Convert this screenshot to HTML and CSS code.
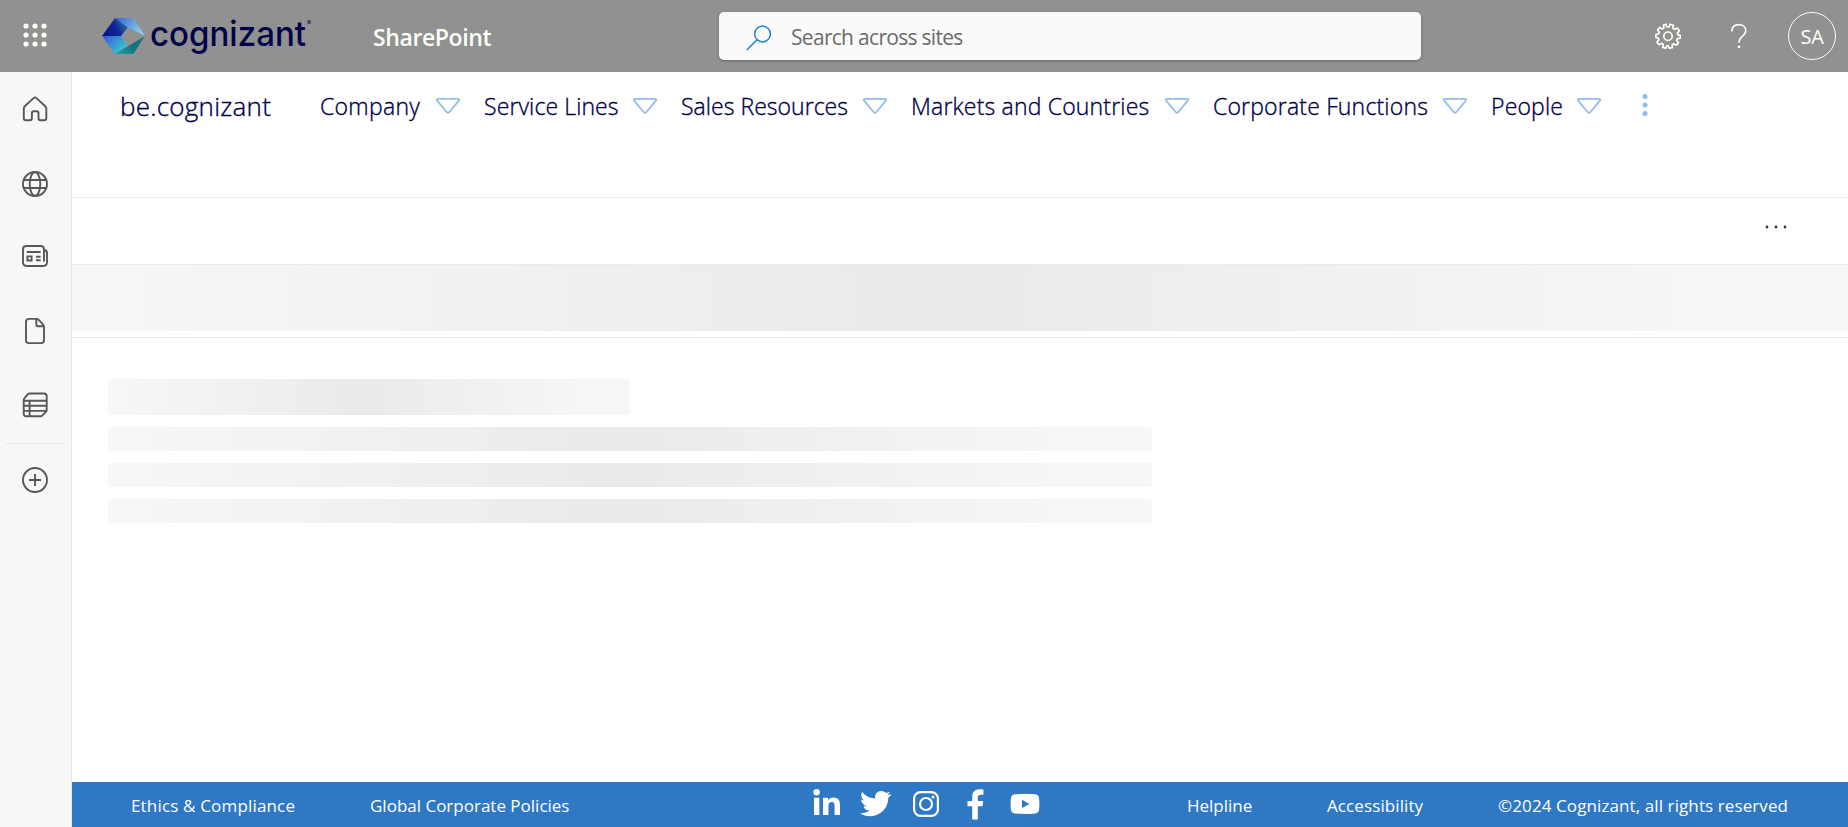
FILE: index.html
```html
<!DOCTYPE html>
<html lang="en">
<head>
<meta charset="utf-8">
<title>be.cognizant</title>
<link rel="stylesheet" href="styles.css">
</head>
<body>
<svg width="0" height="0" class="defs">
  <symbol id="tri" viewBox="0 0 26 18"><path d="M2.7 1.8H23.3Q24.8 2.1 24 3.4L14.2 15.2Q13 16.4 11.8 15.2L2 3.4Q1.2 2.1 2.7 1.8Z" fill="none" stroke="#91bcec" stroke-width="1.7"/></symbol>
</svg>
<header class="top">
  <svg class="waffle" width="24" height="24" viewBox="0 0 24 24" fill="#fbfff5"><circle cx="3" cy="3" r="2.6"/><circle cx="12" cy="3" r="2.6"/><circle cx="21" cy="3" r="2.6"/><circle cx="3" cy="12" r="2.6"/><circle cx="12" cy="12" r="2.6"/><circle cx="21" cy="12" r="2.6"/><circle cx="3" cy="21" r="2.6"/><circle cx="12" cy="21" r="2.6"/><circle cx="21" cy="21" r="2.6"/></svg>
  <svg class="logo" width="212" height="44" viewBox="0 0 212 44">
    <defs>
      <linearGradient id="g1" x1="0" y1=".6" x2="1" y2=".2"><stop offset="0" stop-color="#0a1385"/><stop offset=".5" stop-color="#10289a"/><stop offset="1" stop-color="#2b8ba4"/></linearGradient>
      <linearGradient id="g2" x1="0" y1="0" x2="1" y2=".5"><stop offset="0" stop-color="#3560cf"/><stop offset="1" stop-color="#8ccdeb"/></linearGradient>
      <linearGradient id="g3" x1="0" y1="0" x2="1" y2=".7"><stop offset="0" stop-color="#3b56d2"/><stop offset=".45" stop-color="#3a8ad6"/><stop offset="1" stop-color="#2fd0cc"/></linearGradient>
      <linearGradient id="g4" x1="0" y1="1" x2="1" y2="0"><stop offset="0" stop-color="#2aa3b0"/><stop offset=".5" stop-color="#147080"/><stop offset="1" stop-color="#257a85"/></linearGradient>
    </defs>
    <path d="M0 22L13 4L26 13.200L19 22Z" fill="url(#g1)"/>
    <path d="M13 4H31.500L43 22L26 13.200Z" fill="url(#g2)"/>
    <path d="M0 22H19L25.500 31.500L13 40Z" fill="url(#g3)"/>
    <path d="M13 40L43 22L31.500 40Z" fill="url(#g4)"/>
    <text class="wordmark" x="48" y="31.500" textLength="156" lengthAdjust="spacingAndGlyphs">cognizant</text>
    <text class="reg" x="205" y="10.500">®</text>
  </svg>
  <span class="app">SharePoint</span>
  <div class="search">
    <svg width="26" height="26" viewBox="0 0 26 26" fill="none" stroke="#2080d0" stroke-width="1.5"><circle cx="16.500" cy="9" r="7.900"/><path d="M11 14.800L.8 25"/></svg>
    <span class="ph">Search across sites</span>
  </div>
  <svg class="gear" width="26" height="26" viewBox="0 0 26 26" fill="none" stroke="#fbfff5" stroke-width="1.700" stroke-linejoin="round"><path d="M11 1.200L12 3.900H14L15 1.200L18.400 2.200L17.900 5.200L19.700 6.400L22.200 5L24.400 7.800L22.400 9.800L22.900 11.800L25.200 12.300V15.200L22.300 15.600L21.700 17.500L23.500 19.700L21.300 22.200L18.800 20.800L17.200 21.900L17.400 24.600L14.200 25.200L13.400 22.800H11.800L10.800 25.200L7.800 24.400L8.200 21.500L6.600 20.300L4 21.700L1.900 18.900L3.900 17L3.300 15.100L.9 14.500V11.500L3.600 11L4.300 9.200L2.600 6.800L4.800 4.500L7.200 6L8.900 4.900L8.500 2.100Z"/><circle cx="13" cy="13.200" r="4.200"/></svg>
  <svg class="help" width="18" height="26" viewBox="0 0 18 26" fill="none" stroke="#fbfff5" stroke-width="1.600"><path d="M1.800 8.400C1.800 4 4.600 1.600 8.800 1.600S15.800 4 15.800 7.600C15.800 10.600 14 12 12 13.600C10 15.300 9 16.300 9 19.800"/><circle cx="9" cy="23.800" r="1.400" fill="#fbfff5" stroke="none"/></svg>
  <span class="avatar">SA</span>
</header>
<div class="body">
  <aside class="rail">
    <svg class="home" width="28" height="28" viewBox="0 0 28 28"><path d="M12.600 3.100Q14 1.700 15.400 3.100L24 11Q25.300 12.200 25.300 13.800V23.200Q25.300 25.300 23.200 25.300H19.600Q17.500 25.300 17.500 23.200V18.200Q17.500 16.300 15.600 16.300H12.800Q10.900 16.300 10.900 18.200V23.200Q10.900 25.300 8.800 25.300H4.900Q2.800 25.300 2.800 23.200V13.800Q2.800 12.200 4 11Z"/></svg>
    <svg class="globe" width="28" height="28" viewBox="0 0 28 28"><circle cx="14" cy="14" r="12"/><ellipse cx="14" cy="14" rx="5.300" ry="12"/><path d="M3 10H25M3 18H25"/></svg>
    <svg class="news" width="28" height="28" viewBox="0 0 28 28"><path d="M23 8Q26 8 26 11V20.300Q26 24 22.300 24H5.800Q2 24 2 20.300V7.400Q2 4 5.400 4H19.600Q23 4 23 7.400V19.500"/><path d="M5.800 10H19.600M15 14.800H19.600M15 18.200H19.600M6.400 14.400H10.600V18.500H6.400Z"/></svg>
    <svg class="file" width="28" height="28" viewBox="0 0 28 28"><path d="M8 1.900H15.500Q16.800 1.900 17.800 2.900L21.900 7.300Q23 8.400 23 9.800V23.300Q23 26.100 20.200 26.100H8Q5 26.100 5 23.300V4.900Q5 1.900 8 1.900ZM15.300 2V7.300Q15.300 9.300 17.300 9.300H23"/></svg>
    <svg class="list" width="28" height="28" viewBox="0 0 28 28"><path d="M9 2.500H23Q25.700 2.500 25.700 5.200V18.800Q25.700 20 24.900 20.900L21.500 24.300Q20.600 25.300 19 25.300H5.300Q2.700 25.300 2.700 22.500V9.300Q2.700 7.800 3.700 6.800L6.700 3.500Q7.600 2.500 9 2.500ZM2.700 9.700H25.700M2.700 14.800H25.700M2.700 19.900H25.500M8.600 9.700V25.300"/></svg>
    <hr>
    <svg class="plus" width="28" height="28" viewBox="0 0 28 28"><circle cx="14" cy="14" r="12"/><path d="M14 8V20M8 14H20"/></svg>
  </aside>
  <main class="main">
    <nav class="nav">
      <span class="site">be.cognizant</span>
      <span class="item company">Company</span><svg class="tri"><use href="#tri"/></svg>
      <span class="item service">Service Lines</span><svg class="tri"><use href="#tri"/></svg>
      <span class="item sales">Sales Resources</span><svg class="tri"><use href="#tri"/></svg>
      <span class="item markets">Markets and Countries</span><svg class="tri"><use href="#tri"/></svg>
      <span class="item corporate">Corporate Functions</span><svg class="tri"><use href="#tri"/></svg>
      <span class="item people">People</span><svg class="tri"><use href="#tri"/></svg>
      <svg class="more" width="6" height="24" viewBox="0 0 6 24" fill="#91bcec"><circle cx="3" cy="3.500" r="2.500"/><circle cx="3" cy="12" r="2.500"/><circle cx="3" cy="20.500" r="2.500"/></svg>
    </nav>
    <div class="command"><svg width="22" height="4" viewBox="0 0 22 4" fill="#333"><circle cx="2" cy="2" r="1.400"/><circle cx="11" cy="2" r="1.400"/><circle cx="20" cy="2" r="1.400"/></svg></div>
    <div class="band"><div class="shimmer wide"></div></div>
    <div class="content">
      <div class="shimmer title"></div>
      <div class="shimmer line"></div>
      <div class="shimmer line"></div>
      <div class="shimmer line"></div>
    </div>
    <footer class="footer">
      <span class="f ethics">Ethics &amp; Compliance</span>
      <span class="f policies">Global Corporate Policies</span>
      <span class="social">
        <svg width="28" height="30" viewBox="0 0 28 30"><circle cx="3.600" cy="3.200" r="3.200"/><path d="M1 8.800H6.300V26H1ZM10 8.800H15V11.200C16.200 9.400 18 8.400 20.500 8.400C25 8.400 27 11.200 27 16V26H21.600V16.800C21.600 14.400 20.800 13 18.800 13C16.500 13 15.400 14.500 15.400 17V26H10Z"/></svg>
        <svg width="32" height="30" viewBox="0 0 32 30"><path d="M31.500 5.200C30.500 6.700 29.500 7.700 28.300 8.600C28.500 18.500 21 27.200 10.500 27.200C6.700 27.200 3 26.300.2 24.300C3.800 24.600 7 23.600 9.500 21.600C6.500 21.500 4.300 19.800 3.500 17.200C4.500 17.400 5.500 17.300 6.400 17C3.200 16.300 1.300 13.700 1.200 10.600C2.100 11.100 3.100 11.400 4.100 11.400C1.200 9.300.7 5.800 2.100 3C5.500 7 9.900 9.300 15.300 9.600C14.300 5.500 17.200 2 21.200 2C23 2 24.700 2.700 25.900 3.900C27.400 3.600 28.700 3.100 30 2.400C29.500 3.900 28.500 5.100 27.300 5.900C28.800 5.900 30.200 5.700 31.500 5.200Z"/></svg>
        <svg width="28" height="30" viewBox="0 0 28 30" fill="none" stroke="#fff" stroke-width="2.200"><rect x="2.100" y="3.100" width="23.800" height="23.800" rx="6.500"/><circle cx="14" cy="15" r="6"/><circle cx="21" cy="8" r="1.500" fill="#fff" stroke="none"/></svg>
        <svg width="17" height="31" viewBox="0 0 17 31"><path d="M16.500 .5V5.800H13.500C11.500 5.800 10.800 6.800 10.800 8.500V12H16.200L15.500 17.200H10.800V30.500H5.200V17.200H.5V12H5.200V7.800C5.200 3 8.200.3 12.500.3C14.500.3 15.500.4 16.500.5Z"/></svg>
        <svg width="30" height="30" viewBox="0 0 30 30"><path fill-rule="evenodd" d="M4.500 5.300Q15 4.300 25.500 5.300Q28.600 5.800 29 9Q29.800 15 29 21Q28.600 24 25.500 24.400Q15 25.500 4.500 24.400Q1.400 24 1 21Q.2 15 1 9Q1.400 5.800 4.500 5.300ZM12 10.700V19L19.500 14.900Z"/></svg>
      </span>
      <span class="f helpline">Helpline</span>
      <span class="f access">Accessibility</span>
      <span class="f rights">©2024 Cognizant, all rights reserved</span>
    </footer>
  </main>
</div>
</body>
</html>
```
FILE: styles.css
```css
* { box-sizing: border-box; }
body { margin: 0; height: 827px; overflow: hidden; display: flex; flex-direction: column; background: #fff; font-family: "Open Sans", "Noto Sans", sans-serif; }
svg { display: block; flex: none; }
span { white-space: nowrap; flex: none; }
.defs { display: none; }

.top { height: 72px; flex: none; background: #919191; display: flex; color: #fbfff5; }
.waffle { margin: 23px 0 0 23px; }
.logo { margin: 14px 0 0 55px; overflow: visible; }
.wordmark { font: 500 35px Inter, sans-serif; fill: #000048; }
.reg { font: 6px Inter, sans-serif; fill: #000048; }
.app { width: 346px; margin-left: 59px; line-height: 74px; font-size: 23px; font-weight: 600; letter-spacing: -.4px; }
.search { width: 702px; height: 48px; margin-top: 12px; border-radius: 5px; background: #fafafa; box-shadow: 0 1px 3px rgba(0,0,0,.3); display: flex; }
.search svg { margin: 13px 0 0 27px; }
.ph { margin-left: 19px; line-height: 51px; font-size: 21px; letter-spacing: -.7px; color: #6b6b6b; }
.gear { margin: 23px 0 0 234px; }
.help { margin: 23px 0 0 49px; }
.avatar { width: 48px; height: 48px; margin: 12px 0 0 40px; border: 1px solid #fbfff5; border-radius: 50%; text-align: center; line-height: 48px; font-size: 20px; letter-spacing: -.4px; font-weight: 500; }

.body { flex: 1; display: flex; min-height: 0; }
.rail { width: 72px; flex: none; background: #f7f7f5; border-right: 1px solid #e8e8e8; display: flex; flex-direction: column; align-items: center; padding-right: 1px; }
.rail svg { fill: none; stroke: #55585b; stroke-width: 1.9; }
.home { margin-top: 23px; }
.globe { margin-top: 47px; }
.news { margin-top: 44px; }
.file { margin-top: 47px; }
.list { margin-top: 46px; }
.rail hr { width: 59px; height: 1px; border: 0; margin: 24px 0 0; background: #e6e6e6; }
.plus { margin-top: 22px; }

.main { flex: 1; display: flex; flex-direction: column; min-width: 0; }
.nav { height: 126px; flex: none; border-bottom: 1px solid #eaeaea; display: flex; color: #000048; padding-left: 48px; }
.site, .item { font-weight: 300; -webkit-text-stroke: .35px #000048; }
.site { width: 200px; line-height: 69px; font-size: 26px; letter-spacing: .25px; }
.item { line-height: 69px; font-size: 23px; letter-spacing: .18px; }
.tri { width: 26px; height: 18px; margin: 25px 23px 0 0; }
.item.company { width: 115px; letter-spacing: .3px; }
.item.service { width: 148px; letter-spacing: .1px; }
.item.sales { width: 181px; letter-spacing: .03px; }
.markets { width: 253px; }
.corporate { width: 229px; }
.people { width: 85px; }
.more { margin: 21px 0 0 17px; }
.command { height: 67px; flex: none; border-bottom: 1px solid #eaeaea; display: flex; justify-content: flex-end; padding: 27px 61px 0 0; }
.band { height: 73px; flex: none; border-bottom: 1px solid #eaeaea; }
.shimmer { border-radius: 3px; background: linear-gradient(to right, #f7f7f5 0%, #ebeae8 49%, #f7f7f5 94%); }
.wide { height: 66px; }
.content { flex: 1; padding: 41px 0 0 36px; display: flex; flex-direction: column; gap: 12px; }
.title { width: 522px; height: 36px; }
.line { width: 1044px; height: 24px; }

.footer { height: 45px; flex: none; background: #2f78c4; color: #fff; display: flex; padding-left: 59px; }
.f { line-height: 47px; font-size: 17px; }
.ethics { width: 239px; letter-spacing: .17px; }
.policies { width: 443px; }
.social { width: 374px; display: flex; padding-top: 7px; }
.social svg { fill: #fff; margin-right: 19px; }
.social svg:nth-child(3) { fill: none; margin-left: 1px; }
.social svg:nth-child(4) { margin: 0 26px 0 8px; }
.helpline { width: 140px; }
.access { width: 171px; letter-spacing: .1px; }
.rights { letter-spacing: .1px; }
```
